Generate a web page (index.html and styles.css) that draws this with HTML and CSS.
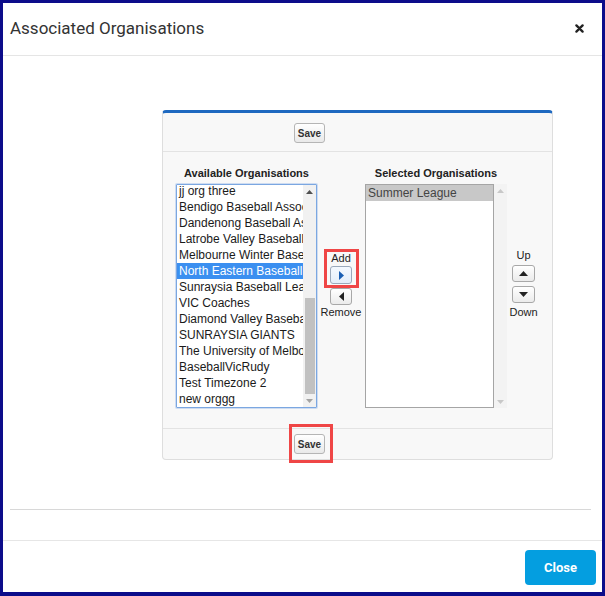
FILE: index.html
```html
<!DOCTYPE html>
<html>
<head>
<meta charset="utf-8">
<link rel="stylesheet" href="styles.css">
</head>
<body>
<div class="window">
  <div class="modal-header">
    <h2 class="title">Associated Organisations</h2>
    <svg class="x-icon" width="9" height="9" viewBox="0 0 9 9"><path d="M1.4 1.4 L7.6 7.6 M7.6 1.4 L1.4 7.6" stroke="#222" stroke-width="2.3" stroke-linecap="round"/></svg>
  </div>
  <div class="modal-body">
    <div class="panel">
      <div class="panel-top"><button class="btn-save">Save</button></div>
      <div class="panel-main">
        <div class="col col-avail">
          <div class="col-label">Available Organisations</div>
          <div class="listbox focused">
            <div class="options shifted">
              <div class="opt">jj org three</div>
              <div class="opt">Bendigo Baseball Association</div>
              <div class="opt">Dandenong Baseball Association</div>
              <div class="opt">Latrobe Valley Baseball League</div>
              <div class="opt">Melbourne Winter Baseball League</div>
              <div class="opt selected">North Eastern Baseball Association</div>
              <div class="opt">Sunraysia Baseball League</div>
              <div class="opt">VIC Coaches</div>
              <div class="opt">Diamond Valley Baseball Association</div>
              <div class="opt">SUNRAYSIA GIANTS</div>
              <div class="opt">The University of Melbourne</div>
              <div class="opt">BaseballVicRudy</div>
              <div class="opt">Test Timezone 2</div>
              <div class="opt">new orggg</div>
            </div>
            <div class="scrollbar">
              <div class="sb-arrow"><svg width="7" height="4" viewBox="0 0 7 4"><path d="M0 4 L3.5 0 L7 4 Z" fill="#505050"/></svg></div>
              <div class="sb-track"><div class="sb-thumb"></div></div>
              <div class="sb-arrow"><svg width="7" height="4" viewBox="0 0 7 4"><path d="M0 0 L3.5 4 L7 0 Z" fill="#a3a3a3"/></svg></div>
            </div>
          </div>
        </div>
        <div class="col col-mid">
          <div class="add-group hl">
            <div class="mini-label">Add</div>
            <button class="mini-btn focus-btn"><svg width="5" height="9" viewBox="0 0 5 9"><path d="M0 0 L5 4.5 L0 9 Z" fill="#1a5fb4"/></svg></button>
          </div>
          <button class="mini-btn remove-btn"><svg width="5" height="9" viewBox="0 0 5 9"><path d="M5 0 L0 4.5 L5 9 Z" fill="#222"/></svg></button>
          <div class="mini-label remove-label">Remove</div>
        </div>
        <div class="col col-sel">
          <div class="col-label">Selected Organisations</div>
          <div class="sel-wrap">
            <div class="listbox plain">
              <div class="options">
                <div class="opt selected-grey">Summer League</div>
              </div>
            </div>
            <div class="scrollbar outside">
              <div class="sb-arrow"><svg width="7" height="4" viewBox="0 0 7 4"><path d="M0 4 L3.5 0 L7 4 Z" fill="#c8c8c8"/></svg></div>
              <div class="sb-track"></div>
              <div class="sb-arrow"><svg width="7" height="4" viewBox="0 0 7 4"><path d="M0 0 L3.5 4 L7 0 Z" fill="#c8c8c8"/></svg></div>
            </div>
          </div>
        </div>
        <div class="col col-order">
          <div class="mini-label">Up</div>
          <button class="mini-btn order-btn up-btn"><svg width="9" height="5" viewBox="0 0 9 5"><path d="M0 5 L4.5 0 L9 5 Z" fill="#222"/></svg></button>
          <button class="mini-btn order-btn down-btn"><svg width="9" height="5" viewBox="0 0 9 5"><path d="M0 0 L4.5 5 L9 0 Z" fill="#222"/></svg></button>
          <div class="mini-label down-label">Down</div>
        </div>
      </div>
      <div class="panel-bottom"><span class="hl hl-save"><button class="btn-save">Save</button></span></div>
    </div>
    <div class="divider"></div>
  </div>
  <div class="modal-footer"><button class="btn-close">Close</button></div>
</div>
</body>
</html>
```

FILE: styles.css
```css
* { box-sizing: border-box; }
html, body { margin: 0; padding: 0; background: #fff; }
.window {
  width: 605px;
  height: 596px;
  border: 3px solid #0c0c8a;
  border-bottom-width: 4px;
  display: flex;
  flex-direction: column;
  background: #fff;
  font-family: "Liberation Sans", Arial, sans-serif;
}
.modal-header {
  height: 53px;
  border-bottom: 1px solid #e5e5e5;
  display: flex;
  align-items: center;
  justify-content: space-between;
  padding: 0 18px 2px 7px;
}
.title {
  margin: 0;
  font-family: Roboto, "Liberation Sans", sans-serif;
  font-weight: 400;
  font-size: 17px;
  color: #333;
}
.x-icon { display: block; }
.modal-body {
  flex: 1;
  padding-top: 54px;
}
.panel {
  margin-left: 159px;
  width: 391px;
  border: 1px solid #dedede;
  border-top: 3px solid #1f69c0;
  border-radius: 4px;
  background: #f8f8f8;
}
.panel-top {
  padding: 10px 0 8px 131px;
  border-bottom: 1px solid #e3e3e3;
  display: flex;
}
.panel-bottom {
  padding: 5px 0 5px 131px;
  display: flex;
}
.btn-save {
  width: 31px;
  height: 20px;
  padding: 0;
  border: 1px solid #b5b5b5;
  border-radius: 3px;
  background: linear-gradient(#ffffff, #e9e9e9);
  font-family: "Liberation Sans", Arial, sans-serif;
  font-weight: bold;
  font-size: 10px;
  color: #333;
  display: block;
}
.hl { position: relative; display: block; }
.hl::after {
  content: "";
  position: absolute;
  border: 3px solid #ef4646;
  pointer-events: none;
}
.hl-save::after { left: -5px; right: -8px; top: -10px; bottom: -9px; }
.add-group.hl::after { left: -3px; right: -3px; top: -3px; bottom: -3px; }

.panel-main {
  display: flex;
  align-items: flex-start;
  padding: 14px 0 20px 13px;
  border-bottom: 1px solid #e3e3e3;
}
.col { display: flex; flex-direction: column; }
.col-avail { width: 141px; }
.col-sel { width: 142px; }
.col-label {
  font-weight: bold;
  font-size: 11px;
  line-height: 14px;
  color: #222;
  text-align: center;
  white-space: nowrap;
  margin-bottom: 4px;
}
.listbox {
  height: 224px;
  display: flex;
  background: #fff;
  overflow: hidden;
}
.listbox.focused {
  border: 1px solid #7ba7e1;
  box-shadow: 0 0 0 1px rgba(130, 170, 230, 0.35);
  border-radius: 1px;
}
.listbox.plain {
  width: 129px;
  border: 1px solid #a5a5a5;
}
.options {
  flex: 1;
  min-width: 0;
  overflow: hidden;
}
.options.shifted .opt:first-child { margin-top: -2px; }
.opt {
  height: 16px;
  line-height: 16px;
  font-size: 12px;
  color: #1a1a1a;
  padding-left: 2px;
  white-space: nowrap;
  overflow: hidden;
}
.opt.selected { background: #3b8ff0; color: #fff; }
.opt.selected-grey { background: #c8c8c8; color: #444; }
.scrollbar {
  width: 13px;
  display: flex;
  flex-direction: column;
  background: #f1f1f1;
}
.scrollbar.outside { height: 224px; background: #f3f3f3; }
.sb-arrow {
  height: 13px;
  display: flex;
  align-items: center;
  justify-content: center;
}
.sb-arrow svg { display: block; }
.sb-track { flex: 1; }
.sb-thumb {
  margin: 100px 1px 0 2px;
  height: 96px;
  background: #c1c1c1;
}
.sel-wrap { display: flex; }

.col-mid {
  width: 48px;
  align-items: center;
  padding-top: 86px;
}
.add-group {
  width: 29px;
  display: flex;
  flex-direction: column;
  align-items: center;
  padding-bottom: 1px;
}
.mini-label {
  font-size: 11px;
  line-height: 12px;
  color: #222;
  text-align: center;
  white-space: nowrap;
}
.mini-btn {
  width: 22px;
  height: 17px;
  padding: 0;
  border: 1px solid #a8a8a8;
  border-radius: 3px;
  background: linear-gradient(#ffffff, #ebebeb);
  display: flex;
  align-items: center;
  justify-content: center;
}
.mini-btn svg { display: block; }
.focus-btn {
  margin-top: 2px;
  height: 18px;
  background: linear-gradient(#f4f9ff, #e3eefa);
  border-color: #9aa9bb;
}
.remove-btn { margin-top: 3px; }
.remove-label { margin-top: 1px; }

.col-order {
  width: 33px;
  align-items: center;
  padding-top: 83px;
}
.order-btn { width: 23px; margin-top: 4px; }
.down-label { margin-top: 3px; }

.divider {
  margin: 49px 11px 0 7px;
  height: 1px;
  background: #d8d8d8;
}
.modal-footer {
  height: 52px;
  border-top: 1px solid #e6e6e6;
  padding: 9px 6px 0 0;
  display: flex;
  justify-content: flex-end;
  align-items: flex-start;
}
.btn-close {
  width: 71px;
  height: 35px;
  border: none;
  border-radius: 4px;
  background: #049ee0;
  color: #fff;
  font-family: Roboto, "Liberation Sans", sans-serif;
  font-weight: bold;
  font-size: 13px;
  padding: 0;
}
```
